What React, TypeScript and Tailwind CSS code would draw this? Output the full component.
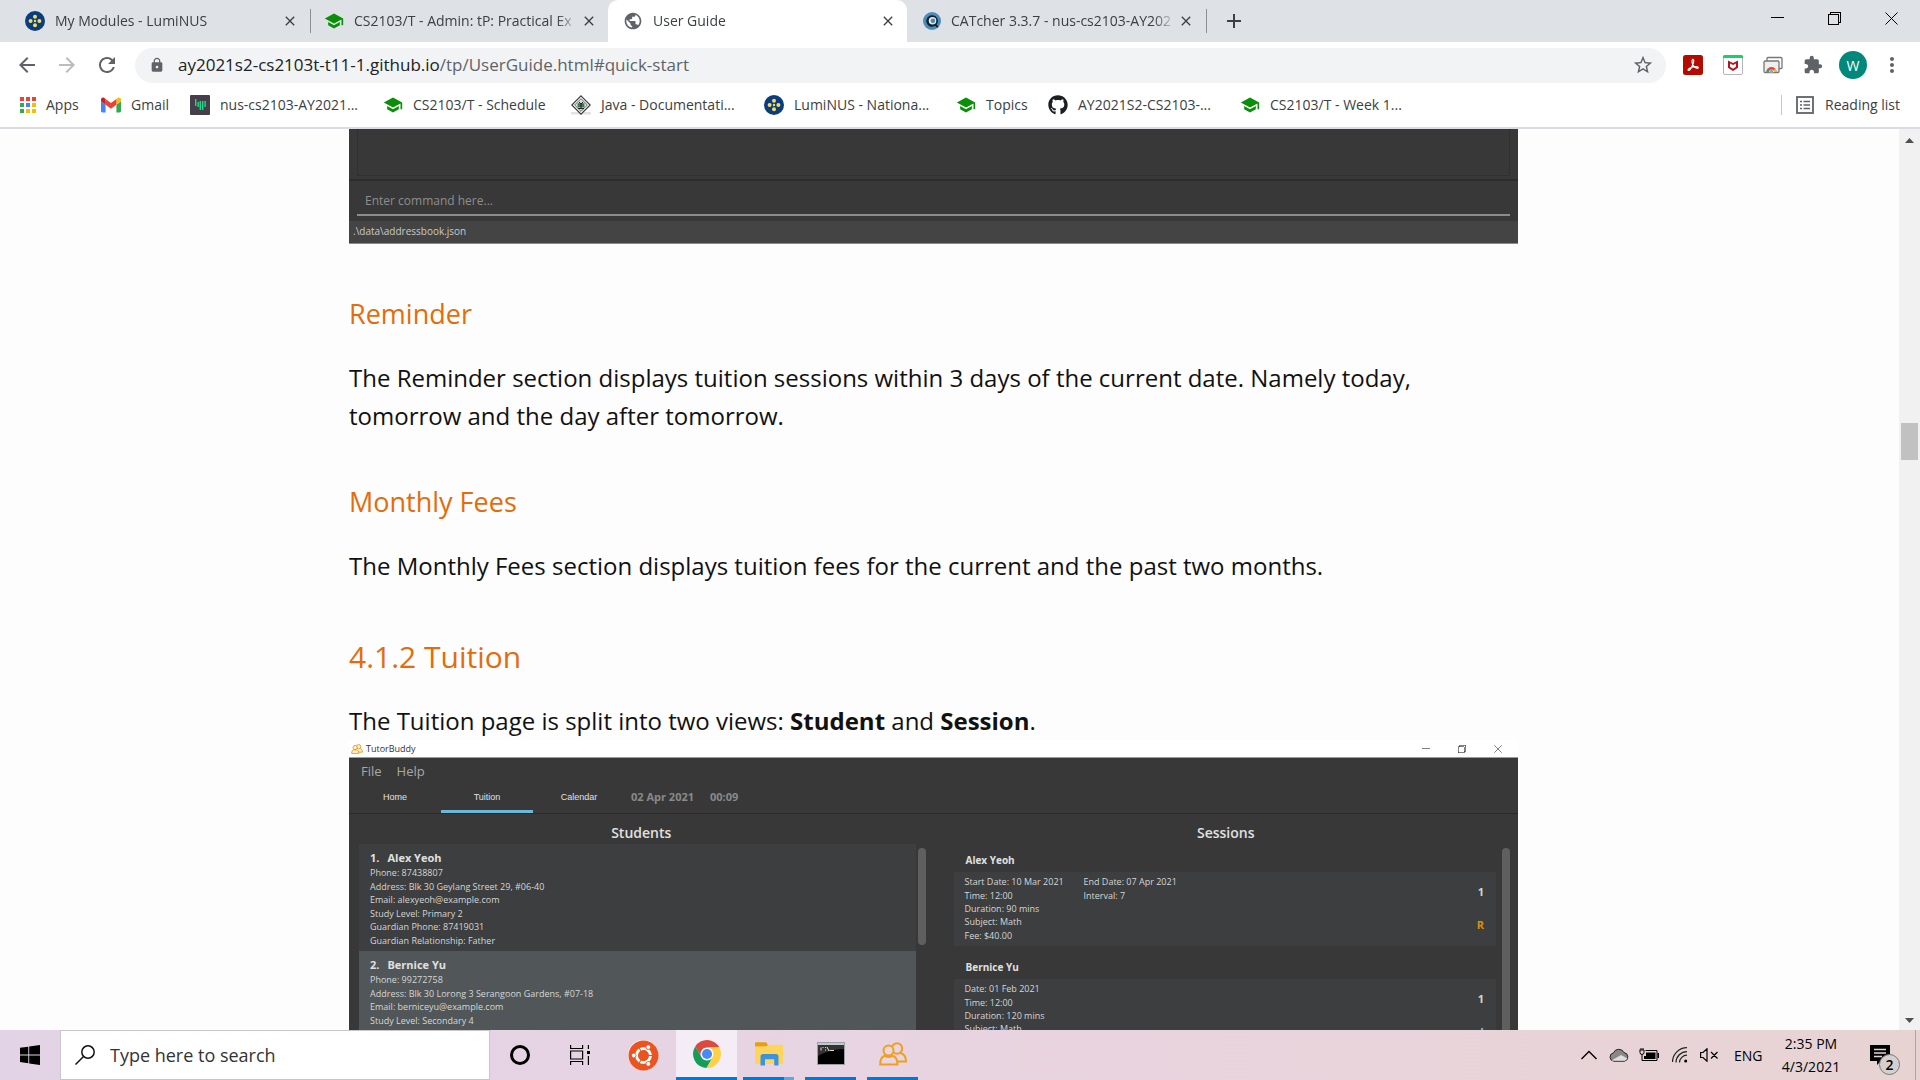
import React from "react";
import {
  MdArrowBack,
  MdArrowForward,
  MdClose,
  MdExtension,
  MdLock,
  MdMoreVert,
  MdPublic,
  MdRefresh,
  MdSchool,
  MdStarBorder,
  MdAdd,
} from "react-icons/md";
import { FaGithub, FaUbuntu } from "react-icons/fa";

/* ---------- icons ---------- */

function LuminusIcon() {
  return (
    <svg viewBox="0 0 20 20" className="size-5 shrink-0" aria-hidden="true">
      <circle cx="10" cy="10" r="10" fill="#0b3d7c" />
      <g fill="#f7dc5a">
        <circle cx="10" cy="5.8" r="2" />
        <circle cx="10" cy="14.2" r="2" />
        <circle cx="5.6" cy="10" r="2" />
        <circle cx="14.4" cy="10" r="2" />
        <circle cx="10" cy="10" r="1.2" />
      </g>
    </svg>
  );
}

function CapIcon() {
  return <MdSchool className="size-5 shrink-0 text-[#0a8f08]" aria-hidden="true" />;
}

function CatcherIcon() {
  return (
    <svg viewBox="0 0 20 20" className="size-[18px] shrink-0" aria-hidden="true">
      <circle cx="10" cy="10" r="10" fill="#4d8db5" />
      <path d="M10 3.6a6.4 6.4 0 1 0 3.4 11.8l2.4 2.2 1.3-1.6-2-2A6.4 6.4 0 0 0 10 3.6z" fill="#10202c" />
      <circle cx="10.6" cy="9.8" r="4.2" fill="#e3eef5" />
      <circle cx="11" cy="9.8" r="2.6" fill="#4d8db5" />
    </svg>
  );
}

function AppsIcon() {
  const colors = [
    ["#ea4335", "#ea4335", "#ea4335"],
    ["#34a853", "#4285f4", "#fbbc04"],
    ["#34a853", "#fbbc04", "#fbbc04"],
  ];
  return (
    <svg viewBox="0 0 16 16" className="size-4 shrink-0" aria-hidden="true">
      {colors.map((row, y) =>
        row.map((c, x) => <rect key={`${x}-${y}`} x={x * 6} y={y * 6} width="4" height="4" fill={c} />)
      )}
    </svg>
  );
}

function GmailIcon() {
  return (
    <svg viewBox="0 0 20 16" className="h-4 w-5 shrink-0" aria-hidden="true">
      <path d="M1.4 15.5H4.6V7.7L0 4.3v9.8c0 .8.6 1.4 1.4 1.4z" fill="#4285f4" />
      <path d="M15.4 15.5h3.2c.8 0 1.4-.6 1.4-1.4V4.3l-4.6 3.4z" fill="#34a853" />
      <path d="M15.4 1.9v5.8L20 4.3V2.5c0-1.7-1.9-2.6-3.3-1.6z" fill="#fbbc04" />
      <path d="M4.6 7.7V1.9L10 6l5.4-4.1v5.8L10 11.8z" fill="#ea4335" />
      <path d="M0 2.5v1.8l4.6 3.4V1.9L3.3.9C1.9-.1 0 .8 0 2.5z" fill="#c5221f" />
    </svg>
  );
}

function PipeIcon() {
  return (
    <svg viewBox="0 0 20 20" className="size-5 shrink-0" aria-hidden="true">
      <rect width="20" height="20" rx="1" fill="#453f49" />
      <g fill="#1fd98a">
        <rect x="5" y="4" width="1.4" height="7" />
        <rect x="7.5" y="7" width="1.4" height="5" />
        <rect x="9.6" y="6" width="1.4" height="9" />
        <rect x="12" y="6" width="1.4" height="9" />
        <rect x="14.4" y="6" width="1.4" height="6" />
      </g>
    </svg>
  );
}

function JavaDocIcon() {
  return (
    <svg viewBox="0 0 20 20" className="size-5 shrink-0" aria-hidden="true">
      <path d="M0 17h20v2.5H0z" fill="#e2e2e2" />
      <path d="M10 .8 19.2 10 10 19.2.8 10z" fill="#fff" stroke="#333" strokeWidth="1.1" />
      <path d="M10 3.6 16.4 10 10 16.4 3.6 10z" fill="#d5ded8" stroke="#444" strokeWidth=".8" />
      <path d="M6.600 8.200h6.800v4.200H6.600z" fill="#3d7a52" />
      <path d="M8 7l2 2 2-2M7 13.5h6M10 9v4" stroke="#222" strokeWidth="1" fill="none" />
    </svg>
  );
}

function AcrobatIcon() {
  return (
    <svg viewBox="0 0 20 20" className="size-5" aria-hidden="true">
      <rect width="20" height="20" rx="2.5" fill="#b30b00" />
      <path
        d="M9.600 4.400c1.500-.4 1.300 2.400.5 4.400-1 2.600-2.800 6.400-4.300 6.700-1.400.2-.8-1.700 1.600-2.700 2.500-1 5.600-1.500 7.200-.9 1.500.7.3 1.900-1.400 1.100-2-.9-3.800-3.500-4.100-5.700-.2-1.500 0-2.700.5-2.900z"
        fill="none"
        stroke="#fff"
        strokeWidth="1.2"
      />
    </svg>
  );
}

function McAfeeIcon() {
  return (
    <svg viewBox="0 0 20 20" className="size-5" aria-hidden="true">
      <rect x=".5" y=".5" width="19" height="19" rx="1.5" fill="#fff" stroke="#b5b5b5" />
      <path d="M0 1.5A1.5 1.5 0 0 1 1.500 0h17A1.500 1.500 0 0 1 20 1.500V3H0z" fill="#0fd46c" />
      <path d="M5 5.500 10 8l5-2.500v7.300L10 16l-5-3.200zm2 2.900v3.400l3 1.900 3-1.900V8.400L10 10z" fill="#b5121b" fillRule="evenodd" />
    </svg>
  );
}

function RemoteTabsIcon() {
  return (
    <svg viewBox="0 0 20 20" className="size-5" aria-hidden="true">
      <rect x="4" y="2.5" width="15" height="11" rx="1" fill="#fff" stroke="#777" strokeWidth="1.3" />
      <rect x="1" y="6" width="15" height="11.5" rx="1" fill="#eee" stroke="#777" strokeWidth="1.3" />
      <path d="M3.500 17a5 5 0 0 1 10 0z" fill="#ea4335" />
      <path d="M3.500 17a5 5 0 0 1 1.300-3.400L8.500 17z" fill="#34a853" />
      <path d="M13.500 17a5 5 0 0 0-1.300-3.400L8.500 17z" fill="#fbbc04" />
      <path d="M6.300 17a2.200 2.200 0 0 1 4.400 0z" fill="#4285f4" stroke="#fff" strokeWidth=".6" />
    </svg>
  );
}

function ReadingListIcon() {
  return (
    <svg viewBox="0 0 18 18" className="size-[18px]" fill="none" stroke="#5f6368" aria-hidden="true">
      <rect x="1" y="1" width="16" height="16" strokeWidth="1.8" />
      <path d="M4 5.500h2M4 9h2M4 12.500h2M7.500 5.500H14M7.500 9H14M7.500 12.500H14" strokeWidth="1.6" />
    </svg>
  );
}

function MinimizeIcon({ className }: { className: string }) {
  return (
    <svg viewBox="0 0 13 13" className={className} stroke="currentColor" fill="none" shapeRendering="crispEdges" aria-hidden="true">
      <path d="M0 5.500h13" />
    </svg>
  );
}
function RestoreIcon({ className }: { className: string }) {
  return (
    <svg viewBox="0 0 13 13" className={className} stroke="currentColor" fill="none" shapeRendering="crispEdges" aria-hidden="true">
      <path d="M.5 2.500h10v10H.5zM2.500 2.500v-2h10v10h-2" />
    </svg>
  );
}
function CrossIcon({ className }: { className: string }) {
  return (
    <svg viewBox="0 0 13 13" className={className} stroke="currentColor" fill="none" aria-hidden="true">
      <path d="M.5.5l12 12M12.500.5l-12 12" />
    </svg>
  );
}

function ChromeLogo() {
  const sector = "M24 13H45.300A24 24 0 0 0 3.820 11.050L14.470 29.500A11 11 0 0 1 24 13Z";
  return (
    <svg viewBox="0 0 48 48" className="size-7" aria-hidden="true">
      <circle cx="24" cy="24" r="12" fill="#fff" />
      <path d={sector} fill="#db4a3c" />
      <path d={sector} fill="#fdd045" transform="rotate(120 24 24)" />
      <path d={sector} fill="#139d58" transform="rotate(240 24 24)" />
      <circle cx="24" cy="24" r="8.700" fill="#4a8af4" />
    </svg>
  );
}

function PeopleIcon({ className }: { className: string }) {
  return (
    <svg viewBox="0 0 28 24" className={className} fill="none" stroke="#f0a020" strokeWidth="2" aria-hidden="true">
      <circle cx="18" cy="6.500" r="5.200" />
      <path d="M21.500 11c3.500 1 5.500 4.500 5.500 8.500H18" />
      <circle cx="9.500" cy="8.500" r="5" fill="#e9d5e4" />
      <path d="M6 13.800C3 14.500 1.200 18 1.200 22.500h17.300c0-4.500-2-8-5.300-8.700-2 1.500-5 1.500-7.200 0z" fill="#e9d5e4" />
    </svg>
  );
}

function TutorBuddyIcon() {
  return (
    <svg viewBox="0 0 28 24" className="mr-[3px] h-2.5 w-3" fill="#fdf3e0" stroke="#f0a020" strokeWidth="2.4" aria-hidden="true">
      <path d="M21.500 11c3.500 1 5.500 4.500 5.500 8.500H18" />
      <circle cx="18" cy="6.500" r="5.200" />
      <circle cx="9.500" cy="8.500" r="5" />
      <path d="M6 13.800C3 14.500 1.200 18 1.200 22.500h17.300c0-4.500-2-8-5.300-8.700-2 1.500-5 1.500-7.200 0z" />
    </svg>
  );
}

function FolderIcon() {
  return (
    <svg viewBox="0 0 28 24" className="h-6 w-7" aria-hidden="true">
      <path d="M0 1.500C0 .7.500.3 1.200.3H11l2 2.500-1.500 2H0z" fill="#e5a00d" />
      <path d="M0 4.500h12l2-1.800h14V22H0z" fill="#ffd45a" />
      <path d="M5.500 23.500v-9c0-1.500 1-2.500 2.500-2.500h13c1.500 0 2.500 1 2.500 2.500v9h-4.300v-6.200H10v6.200z" fill="#3a93dc" />
    </svg>
  );
}

function TerminalIcon() {
  return (
    <svg viewBox="0 0 28 23" className="h-[23px] w-7" aria-hidden="true">
      <rect x=".5" y=".5" width="27" height="22" fill="#000" stroke="#9aa0a6" />
      <rect x="1" y="1" width="26" height="2" fill="#c4c8cc" />
      <path d="M1 3h26v4C18 7 8 10 1 14z" fill="#333" />
      <path d="M4 5.500v3M6.500 5.500h-1M8.500 5v1M8.500 7.500v1M10 5l2 4M12.500 8.500H17" stroke="#ddd" strokeWidth="1" />
    </svg>
  );
}

/* ---------- browser chrome ---------- */

type TabProps = { icon: React.ReactNode; title: string; active?: boolean; wide: string; divider?: boolean };

function Tab({ icon, title, active, wide, divider }: TabProps) {
  return (
    <div className={`flex h-full items-center ${wide} ${active ? "rounded-t-[10px] bg-white" : ""}`}>
      <button role="tab" aria-selected={!!active} className="flex min-w-0 flex-1 items-center gap-2.5 text-left">
        {icon}
        <span className="min-w-0 flex-1 overflow-hidden pb-0.5 whitespace-nowrap mask-r-from-90% mask-r-to-100%">
          {title}
        </span>
      </button>
      <button aria-label={`Close ${title}`} className="grid size-5 shrink-0 place-items-center">
        <MdClose className="size-4 text-[#3c4043]" />
      </button>
      {divider && <span className="ml-2.5 h-6 w-px bg-[#8b8e93]" />}
    </div>
  );
}

function TabStrip() {
  return (
    <header className="flex h-[42px] shrink-0 items-stretch bg-[#dee1e6] text-[14px] text-[#3c4043]">
      <div role="tablist" className="flex">
        <Tab wide="w-[311px] pl-[25px]" icon={<LuminusIcon />} title="My Modules - LumiNUS" divider />
        <Tab wide="w-[297px] pl-[13px] pr-[9px]" icon={<CapIcon />} title="CS2103/T - Admin: tP: Practical Ex" />
        <Tab
          wide="w-[299px] pl-[15px] pr-[9px]"
          active
          icon={<MdPublic className="size-5 text-[#5f6368]" />}
          title="User Guide"
        />
        <Tab wide="w-[300px] pl-4" icon={<CatcherIcon />} title="CATcher 3.3.7 - nus-cs2103-AY202" divider />
      </div>
      <button aria-label="New tab" className="grid w-[53px] place-items-center">
        <MdAdd className="size-6 text-[#3c4043]" />
      </button>
      <div className="ml-auto flex pb-1.5 text-black">
        <button aria-label="Minimize" className="grid w-[57px] place-items-center">
          <MinimizeIcon className="size-[13px]" />
        </button>
        <button aria-label="Restore" className="grid w-[57px] place-items-center">
          <RestoreIcon className="size-[13px]" />
        </button>
        <button aria-label="Close window" className="grid w-[57px] place-items-center">
          <CrossIcon className="size-[13px]" />
        </button>
      </div>
    </header>
  );
}

function Toolbar() {
  return (
    <div className="flex h-[46px] shrink-0 items-center bg-white pr-4 pl-[7px]">
      <button aria-label="Back" className="grid w-10 place-items-center">
        <MdArrowBack className="size-6 text-[#5f6368]" />
      </button>
      <button aria-label="Forward" className="grid w-10 place-items-center">
        <MdArrowForward className="size-6 text-[#babcbe]" />
      </button>
      <button aria-label="Reload" className="grid w-10 place-items-center">
        <MdRefresh className="size-6 text-[#5f6368]" />
      </button>
      <div className="ml-2 flex h-[35px] flex-1 items-center gap-[13px] rounded-full bg-[#f1f3f4] pr-3 pl-3.5">
        <MdLock className="size-4 text-[#5f6368]" aria-hidden="true" />
        <a href="#quick-start" className="flex-1 text-[17px] text-[#202124]">
          ay2021s2-cs2103t-t11-1.github.io<span className="text-[#5f6368]">/tp/UserGuide.html#quick-start</span>
        </a>
        <button aria-label="Bookmark this page">
          <MdStarBorder className="size-[22px] text-[#5f6368]" />
        </button>
      </div>
      <div className="ml-[17px] flex items-center gap-5">
        <button aria-label="Acrobat"><AcrobatIcon /></button>
        <button aria-label="McAfee"><McAfeeIcon /></button>
        <button aria-label="Remote tabs"><RemoteTabsIcon /></button>
        <button aria-label="Extensions"><MdExtension className="size-5 text-[#5f6368]" /></button>
      </div>
      <button
        aria-label="Profile"
        className="ml-4 grid size-7 place-items-center rounded-full bg-[#00897b] text-[14px] text-white"
      >
        W
      </button>
      <button aria-label="Menu" className="ml-[13px]">
        <MdMoreVert className="size-6 text-[#5f6368]" />
      </button>
    </div>
  );
}

const bookmarks = [
  { label: "Apps", wide: "w-[81px]", icon: <AppsIcon /> },
  { label: "Gmail", wide: "w-[89px]", icon: <GmailIcon /> },
  { label: "nus-cs2103-AY2021...", wide: "w-[193px]", icon: <PipeIcon /> },
  { label: "CS2103/T - Schedule", wide: "w-[188px]", icon: <CapIcon /> },
  { label: "Java - Documentati...", wide: "w-[193px]", icon: <JavaDocIcon /> },
  { label: "LumiNUS - Nationa...", wide: "w-[192px]", icon: <LuminusIcon /> },
  { label: "Topics", wide: "w-[92px]", icon: <CapIcon /> },
  { label: "AY2021S2-CS2103-...", wide: "w-[192px]", icon: <FaGithub className="size-5 shrink-0 text-[#1b1f23]" /> },
  { label: "CS2103/T - Week 1...", wide: "w-[190px]", icon: <CapIcon /> },
];

function BookmarksBar() {
  return (
    <nav className="flex h-[41px] shrink-0 items-center border-b-2 border-[#dadce0] bg-white pr-5 pb-1.5 pl-5 text-[14px] text-[#3c4043]">
      {bookmarks.map((b) => (
        <a key={b.label} href="#quick-start" className={`flex items-center gap-2.5 whitespace-nowrap ${b.wide}`}>
          {b.icon}
          {b.label}
        </a>
      ))}
      <button className="ml-auto flex items-center gap-[11px] whitespace-nowrap">
        <span className="mr-[3px] h-5 w-px bg-[#c6c8cc]" />
        <ReadingListIcon />
        Reading list
      </button>
    </nav>
  );
}

/* ---------- guide contents ---------- */

function CommandShot() {
  return (
    <div className="border-b border-[#8a8a8a] bg-[#383838]">
      <div className="mx-2 h-[47px] border-x border-b border-[#303030]" />
      <div className="mt-[3px] border-t-2 border-[#2c2c2c] px-2 pt-1.5 pb-[5px]">
        <input
          aria-label="Command"
          placeholder="Enter command here..."
          className="block h-[29px] w-full border-b-2 border-[#8c8c8c] bg-transparent px-2 text-[12px] text-[#cccccc] outline-none placeholder:text-[#8e8e8e]"
        />
      </div>
      <p className="h-[22px] bg-[#444444] px-1 text-[10px] leading-[21px] text-[#c9c9c9]">.\data\addressbook.json</p>
    </div>
  );
}

function Student({ index, name, lines, selected }: { index: number; name: string; lines: string[]; selected?: boolean }) {
  return (
    <li className={`h-[107px] pt-1.5 pl-[11px] ${selected ? "bg-[#515658]" : "bg-[#3c3e3f]"}`}>
      <h4 className="flex gap-2 text-[11px] leading-4 font-bold text-[#e0e0e0]">
        <span>{index}.</span>
        {name}
      </h4>
      <div className="grid h-[81px] grid-rows-6 items-center text-[9px] leading-[13px] text-[#d6d6d6]">
        {lines.map((l) => (
          <p key={l}>{l}</p>
        ))}
      </div>
    </li>
  );
}

function Session({ name, left, right, tag }: { name: string; left: string[]; right: string[]; tag: React.ReactNode }) {
  return (
    <section className="h-[107px]">
      <h4 className="h-7 pt-2 pl-3 text-[10px] leading-4 font-bold text-[#e0e0e0]">{name}</h4>
      <div className="flex h-[74px] bg-[#3c3e3f] pt-[3px] pr-3 pb-1 pl-[11px] text-[9px] leading-[13px] text-[#d6d6d6]">
        <div className="grid w-[119px] grid-rows-5 items-center">
          {left.map((l) => (
            <p key={l}>{l}</p>
          ))}
        </div>
        <div className="grid flex-1 grid-rows-5 items-center">
          {right.map((l) => (
            <p key={l}>{l}</p>
          ))}
        </div>
        <div className="flex flex-col items-end gap-5 pt-2.5 text-[11px] font-bold">
          <span>1</span>
          {tag}
        </div>
      </div>
    </section>
  );
}

function TutorBuddyShot() {
  return (
    <div className="bg-[#383838]">
      <div className="flex h-[18px] items-center border-b border-[#9a9a9a] bg-white pr-4 pl-0.5 text-[9px] text-[#333]">
        <TutorBuddyIcon />
        TutorBuddy
        <div className="ml-auto flex items-center gap-7 leading-none">
          <button aria-label="Minimize TutorBuddy"><MinimizeIcon className="size-2" /></button>
          <button aria-label="Restore TutorBuddy"><RestoreIcon className="size-2" /></button>
          <button aria-label="Close TutorBuddy"><CrossIcon className="size-2" /></button>
        </div>
      </div>
      <div className="flex h-[26px] items-center gap-[15px] pl-3 text-[13px] text-[#a8a8a8]">
        <button>File</button>
        <button>Help</button>
      </div>
      <div className="flex h-[30px] border-b border-[#2b2b2b] text-[#e0e0e0]">
        <div role="tablist" className="flex font-['Liberation_Sans',sans-serif] text-[9px] leading-4">
          <button role="tab" aria-selected="false" className="w-[92px] pb-[3px]">Home</button>
          <button role="tab" aria-selected="true" className="w-[92px] border-b-3 border-[#6fb7d6]">Tuition</button>
          <button role="tab" aria-selected="false" className="w-[92px] pb-[3px]">Calendar</button>
        </div>
        <p className="flex gap-4 pl-1.5 text-[11px] leading-[26px] font-bold text-[#8a8a8a]">
          <span>02 Apr 2021</span>
          <span>00:09</span>
        </p>
      </div>
      <div className="grid grid-cols-2 pt-2">
        <div>
          <h3 className="text-center text-[14px] leading-[22px] font-semibold text-[#e0e0e0]">Students</h3>
          <div className="flex gap-0.5 pr-2 pl-2.5">
            <ul className="flex-1">
              <Student
                index={1}
                name="Alex Yeoh"
                lines={[
                  "Phone: 87438807",
                  "Address: Blk 30 Geylang Street 29, #06-40",
                  "Email: alexyeoh@example.com",
                  "Study Level: Primary 2",
                  "Guardian Phone: 87419031",
                  "Guardian Relationship: Father",
                ]}
              />
              <Student
                index={2}
                name="Bernice Yu"
                selected
                lines={[
                  "Phone: 99272758",
                  "Address: Blk 30 Lorong 3 Serangoon Gardens, #07-18",
                  "Email: berniceyu@example.com",
                  "Study Level: Secondary 4",
                ]}
              />
            </ul>
            <div className="mt-1 h-[97px] w-2 rounded-sm bg-[#5f5f5f]" />
          </div>
        </div>
        <div>
          <h3 className="text-center text-[14px] leading-[22px] font-semibold text-[#e0e0e0]">Sessions</h3>
          <div className="flex gap-1.5 pr-2 pl-5">
            <div className="flex-1">
              <Session
                name="Alex Yeoh"
                left={["Start Date: 10 Mar 2021", "Time: 12:00", "Duration: 90 mins", "Subject: Math", "Fee: $40.00"]}
                right={["End Date: 07 Apr 2021", "Interval: 7"]}
                tag={<span className="text-[#d8900f]">R</span>}
              />
              <Session
                name="Bernice Yu"
                left={["Date: 01 Feb 2021", "Time: 12:00", "Duration: 120 mins", "Subject: Math"]}
                right={[]}
                tag={<span className="text-[#7fc4e0]">I</span>}
              />
            </div>
            <div className="mt-1 w-2 rounded-sm bg-[#5f5f5f]" />
          </div>
        </div>
      </div>
    </div>
  );
}

function Guide() {
  return (
    <main className="min-w-0 flex-1 overflow-hidden bg-[#fdfdfd]">
      <article className="mx-auto max-w-[1201px] pr-8 text-[24px] leading-[38px] text-[#111111]">
        <CommandShot />
        <h3 className="mt-[51px] text-[27px] text-[#e46c0a]">Reminder</h3>
        <p className="mt-[26px]">
          The Reminder section displays tuition sessions within 3 days of the current date. Namely today, tomorrow and
          the day after tomorrow.
        </p>
        <h3 className="mt-12 text-[27px] text-[#e46c0a]">Monthly Fees</h3>
        <p className="mt-[26px]">The Monthly Fees section displays tuition fees for the current and the past two months.</p>
        <h2 className="mt-[53px] text-[30px] text-[#e46c0a]">4.1.2 Tuition</h2>
        <p className="mt-[26px]">
          The Tuition page is split into two views: <strong>Student</strong> and <strong>Session</strong>.
        </p>
        <TutorBuddyShot />
      </article>
    </main>
  );
}

function Scrollbar() {
  return (
    <div className="flex w-[21px] shrink-0 flex-col items-center bg-[#f1f1f1] py-[7px]">
      <svg viewBox="0 0 9 5" className="mt-0.5 h-[5px] w-[9px]" aria-hidden="true">
        <path d="M0 5 4.500 0 9 5z" fill="#505050" />
      </svg>
      <div className="mt-[280px] h-[37px] w-[17px] bg-[#c1c1c1]" />
      <svg viewBox="0 0 9 5" className="mt-auto h-[5px] w-[9px]" aria-hidden="true">
        <path d="M0 0 4.500 5 9 0z" fill="#505050" />
      </svg>
    </div>
  );
}

/* ---------- taskbar ---------- */

function Taskbar() {
  return (
    <footer className="flex h-[50px] shrink-0 items-stretch bg-linear-to-r from-[#e2d3e6] via-[#e8d4e2] via-45% to-[#e8d3d3] text-black">
      <button aria-label="Start" className="grid w-[60px] place-items-center">
        <svg viewBox="0 0 20 20" className="size-5" aria-hidden="true">
          <path d="M0 2.800 8.300 1.700v7.800H0zM9.200 1.500 20 0v9.500H9.200zM0 10.400h8.300v7.900L0 17.100zM9.200 10.400H20V20L9.200 18.400z" />
        </svg>
      </button>
      <label className="flex w-[430px] items-center gap-[15px] border border-[#c9c5cb] bg-white pl-3.5">
        <svg viewBox="0 0 20 20" className="size-5 shrink-0" fill="none" stroke="#111" strokeWidth="1.5" aria-hidden="true">
          <circle cx="13" cy="7" r="6.200" />
          <path d="M8.500 11.500.5 19.500" />
        </svg>
        <input
          type="text"
          aria-label="Search"
          placeholder="Type here to search"
          className="min-w-0 flex-1 bg-transparent text-[18px] outline-none placeholder:text-[#333333]"
        />
      </label>
      <button aria-label="Cortana" className="grid w-[60px] place-items-center">
        <span className="size-5 rounded-full border-3 border-black" />
      </button>
      <button aria-label="Task view" className="grid w-[59px] place-items-center">
        <svg viewBox="0 0 20 20" className="size-5" fill="none" stroke="#000" strokeWidth="1.2" aria-hidden="true">
          <path d="M.6 0v3.500h12V0M.6 20v-3.500h12V20M.6 6h12v8H.6zM18.400 0v4M18.400 11v9" />
          <path d="M17 6h3v3h-3z" fill="#000" stroke="none" />
        </svg>
      </button>
      <button aria-label="Ubuntu" className="grid w-[67px] place-items-center">
        <span className="grid size-[30px] place-items-center rounded-full bg-white">
          <FaUbuntu className="size-[31px] text-[#e95420]" />
        </span>
      </button>
      <button aria-label="Chrome" className="grid w-[61px] place-items-center border-b-3 border-[#0078d7] bg-[#f5edf5]">
        <ChromeLogo />
      </button>
      <button aria-label="File Explorer" className="ml-1.5 flex w-[51px] flex-col items-center">
        <span className="grid flex-1 place-items-center"><FolderIcon /></span>
        <span className="h-[3px] w-full border-r-10 border-[#5aa9e6] bg-[#0078d7]" />
      </button>
      <button aria-label="Command Prompt" className="ml-[11px] grid w-[51px] place-items-center border-b-3 border-[#0078d7]">
        <TerminalIcon />
      </button>
      <button aria-label="TutorBuddy" className="ml-[11px] grid w-[51px] place-items-center border-b-3 border-[#0078d7]">
        <PeopleIcon className="h-6 w-7" />
      </button>

      <div className="ml-auto flex items-center">
        <button aria-label="Show hidden icons" className="mr-3">
          <svg viewBox="0 0 16 10" className="h-2.5 w-4" fill="none" stroke="#000" strokeWidth="1.4" aria-hidden="true">
            <path d="M.5 9 8 1.500 15.500 9" />
          </svg>
        </button>
        <svg viewBox="0 0 20 14" className="mr-2.5 h-3.5 w-5" aria-label="OneDrive">
          <path d="M5 13.200a4.200 4.200 0 0 1-.6-8.300A5.800 5.800 0 0 1 15 4.600a4.400 4.400 0 0 1 .6 8.600z" fill="#8a8787" stroke="#222" />
          <path d="M2.500 12.500 12 7l6.500 3.500-2.500 2.200H5z" fill="#dedede" />
        </svg>
        <svg viewBox="0 0 20 14" className="mr-[13px] h-3.5 w-5" fill="none" stroke="#000" aria-label="Battery">
          <path d="M1 2v2.500a2 2 0 0 0 4 0V2H.5M2 2V0M4 2V0M3 6.500V12.500h15v-10H6.500" />
          <path d="M7 4.500h9.500V11H5V8h2z" fill="#000" stroke="none" />
          <path d="M19.300 5v5" strokeWidth="1.4" />
        </svg>
        <svg viewBox="0 0 16 16" className="mr-3 size-4" fill="none" stroke="#222" aria-label="Wi-Fi">
          <path d="M.5 15A14.500 14.500 0 0 1 15 .7M4 15.500A11 11 0 0 1 15 4.600M7.500 15.500A7.500 7.500 0 0 1 15 8.200" strokeWidth="1.2" />
          <circle cx="13.700" cy="14" r="1.500" fill="#000" stroke="none" />
        </svg>
        <svg viewBox="0 0 19 14" className="mr-[15px] h-3.5 w-[19px]" fill="none" stroke="#000" strokeWidth="1.2" aria-label="Muted">
          <path d="M.6 4.500H3L7 .8v12.400L3 9.500H.6zM11 4l6.500 6.500M17.500 4 11 10.500" />
        </svg>
        <button className="w-[46px] text-left text-[14px]">ENG</button>
        <button className="w-[62px] text-center text-[14px] leading-[23px] whitespace-nowrap">
          2:35 PM
          <br />
          4/3/2021
        </button>
        <button aria-label="2 notifications" className="relative ml-7 h-full w-[46px] border-r border-[#b3a3a6]">
          <svg viewBox="0 0 20 20" className="h-5 w-5" aria-hidden="true">
            <path d="M0 0h20v16H11l-4 4v-4H0z" />
            <path d="M4 4.500h12M4 8h12M4 11.500h8" stroke="#e8d3d3" strokeWidth="1.3" />
          </svg>
          <span className="absolute top-6 left-[9px] grid size-[21px] place-items-center rounded-full border border-[#777] bg-[#d5cfcf] text-[14px] leading-none font-semibold">
            2
          </span>
        </button>
        <span className="w-1" />
      </div>
    </footer>
  );
}

export default function App() {
  return (
    <div className="flex h-screen flex-col overflow-hidden bg-white font-['Open_Sans','Noto_Sans',sans-serif]">
      <TabStrip />
      <Toolbar />
      <BookmarksBar />
      <div className="flex min-h-0 flex-1">
        <Guide />
        <Scrollbar />
      </div>
      <Taskbar />
    </div>
  );
}
